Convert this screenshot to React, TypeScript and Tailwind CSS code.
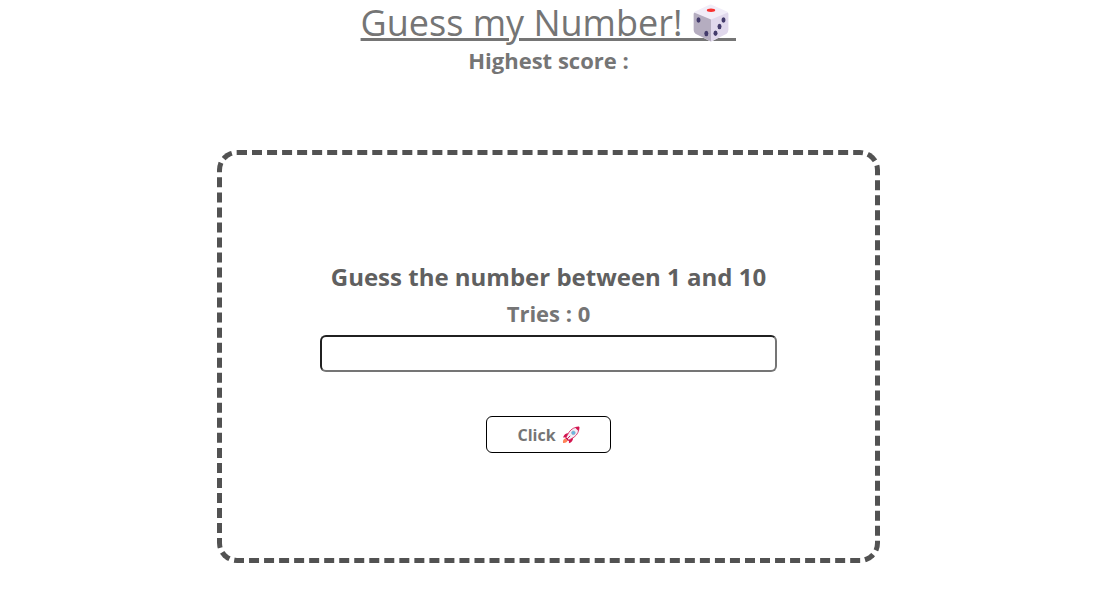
function Dice() {
  return (
    <svg viewBox="0 0 36 38" className="h-[38px] w-9" role="img" aria-label="Dice">
      <path d="M18 0.5 34 7.5Q35.5 8.3 35.3 10V26Q35.3 28.5 33.5 29.8L19.5 37Q18 37.8 16.5 37L2.5 29.8Q0.7 28.5 0.7 26V10Q0.5 8.3 2 7.5L16.5 0.8Z" fill="#f1edf8" />
      <path d="M0.7 10Q0.7 8.4 2.3 9L18 15.5V37.4L2.5 29.8Q0.7 28.6 0.7 26Z" fill="#b5adc0" />
      <path d="M18 15.5 33.7 9Q35.3 8.4 35.3 10V26Q35.3 28.5 33.5 29.8L18 37.4Z" fill="#e0d8ec" />
      <ellipse cx="18" cy="6.3" rx="4.2" ry="1.7" fill="#f8312f" />
      <g fill="#433b6b">
        <ellipse cx="5.5" cy="16" rx="2" ry="2.7" />
        <ellipse cx="13.3" cy="29.5" rx="2" ry="2.7" />
        <ellipse cx="30.5" cy="16" rx="2" ry="2.7" />
        <ellipse cx="26.5" cy="22.5" rx="2" ry="2.7" />
        <ellipse cx="22.5" cy="29.3" rx="2" ry="2.7" />
      </g>
    </svg>
  );
}

function Rocket() {
  return (
    <svg viewBox="0 0 18 18" className="size-[18px]" aria-hidden="true">
      <path d="M1 17Q0.5 13 3.3 12.5L5.6 14.6Q5 17.3 1 17Z" fill="#ff8257" />
      <path d="M6.5 7.2Q2.5 7 1 11.5L4.5 11.3ZM11.2 11.7Q11 15.7 6.9 17.3L7 13.7Z" fill="#d3144f" />
      <path d="M17 1Q10.5 1 7 6.2L3.8 11.8 6.4 14.4 12 11.2Q17.2 7.3 17 1Z" fill="#f3f0f7" stroke="#d61c55" strokeWidth="0.8" />
      <path d="M17.2 0.8Q14.8 0.7 13 1.5L16.4 5Q17.3 3 17.2 0.8Z" fill="#d3144f" />
      <path d="M4.2 11.2 7 14 6 14.9 3.2 12.1Z" fill="#c90d48" />
      <circle cx="11.4" cy="6.8" r="1.9" fill="#65b8e4" stroke="#9b9bae" strokeWidth="0.5" />
      <path d="M7.9 10.2 5.4 12.7" stroke="#d3144f" strokeWidth="1" strokeLinecap="round" />
    </svg>
  );
}

export default function App() {
  return (
    <main className="flex flex-col items-center bg-white pr-[11px] pb-9 font-['Open_Sans','Noto_Sans',sans-serif] text-[#757575]">
      <h1 className="flex h-[46px] items-start text-4xl leading-[46px] font-medium">
        <span className="underline decoration-3 underline-offset-2">Guess my Number!</span>
        <span className="relative flex h-[46px] w-[54px] justify-center pl-1">
          <span className="absolute inset-x-0 top-[38px] h-[3px] bg-[#757575]" />
          <span className="relative pt-1"><Dice /></span>
        </span>
      </h1>
      <h2 className="text-[22px] leading-7 font-bold">Highest score :</h2>
      <form
        className="mt-[76px] flex min-h-[413px] w-full max-w-[663px] flex-col items-center justify-center rounded-[20px] border-5 border-dashed border-[#525252] px-[98px] pb-[2px]"
        onSubmit={(event) => event.preventDefault()}
      >
        <label htmlFor="guess" className="text-2xl leading-9 font-bold text-[#606060]">
          Guess the number between 1 and 10
        </label>
        <p className="text-[22px] leading-9 font-bold">Tries : 0</p>
        <input
          id="guess"
          type="text"
          className="mt-1 h-[37px] w-full rounded-md border-2 border-t-[#202020] border-r-[#757575] border-b-[#757575] border-l-[#202020] bg-white px-3 outline-none"
        />
        <button
          type="submit"
          className="mt-11 flex h-[37px] w-[125px] items-center justify-center gap-1.5 rounded-md border border-black bg-white pt-px font-bold"
        >
          Click <Rocket />
        </button>
      </form>
    </main>
  );
}
